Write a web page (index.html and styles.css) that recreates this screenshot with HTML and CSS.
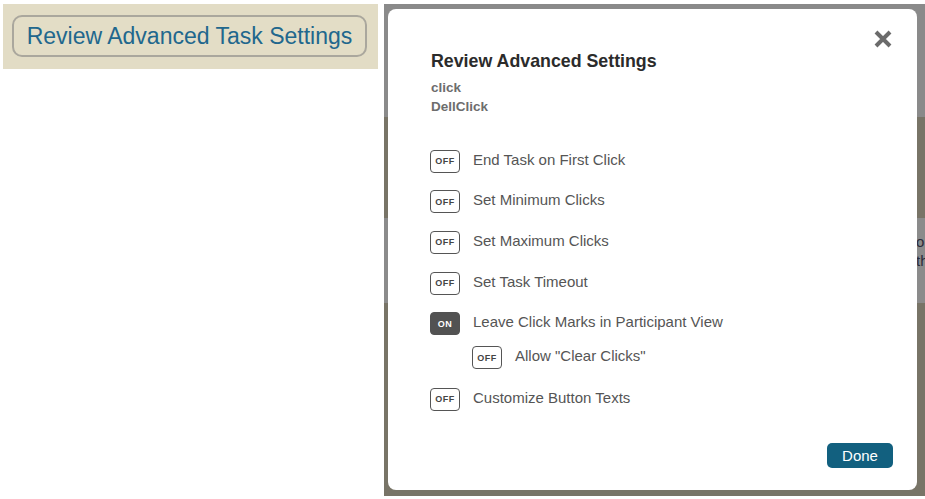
FILE: index.html
```html
<!DOCTYPE html>
<html lang="en">
<head>
  <meta charset="UTF-8">
  <meta name="viewport" content="width=device-width, initial-scale=1.0">
  <title>Review Advanced Settings</title>
  <link rel="stylesheet" href="styles.css">
</head>
<body>
  <div class="page">
    <div class="toolbar-col">
      <div class="toolbar">
        <button class="review-btn">Review Advanced Task Settings</button>
      </div>
    </div>

    <div class="overlay">
      <span class="peek">o<br>th</span>

      <div class="modal">
        <button class="close" aria-label="Close">
          <svg width="20" height="20" viewBox="0 0 20 20">
            <path d="M3 3 L17 17 M17 3 L3 17" stroke="#6b6b6b" stroke-width="4" fill="none"/>
          </svg>
        </button>

        <h2 class="modal-title">Review Advanced Settings</h2>
        <div class="meta">click<br>DellClick</div>

        <ul class="settings">
          <li class="setting"><span class="toggle">OFF</span><span class="label">End Task on First Click</span></li>
          <li class="setting"><span class="toggle">OFF</span><span class="label">Set Minimum Clicks</span></li>
          <li class="setting"><span class="toggle">OFF</span><span class="label">Set Maximum Clicks</span></li>
          <li class="setting"><span class="toggle">OFF</span><span class="label">Set Task Timeout</span></li>
          <li class="setting"><span class="toggle on">ON</span><span class="label">Leave Click Marks in Participant View</span></li>
          <li class="setting sub"><span class="toggle">OFF</span><span class="label">Allow "Clear Clicks"</span></li>
          <li class="setting"><span class="toggle">OFF</span><span class="label">Customize Button Texts</span></li>
        </ul>

        <div class="footer">
          <button class="done">Done</button>
        </div>
      </div>
    </div>
  </div>
</body>
</html>
```

FILE: styles.css
```css
body {
  margin: 0;
  font-family: "Liberation Sans", Arial, sans-serif;
  background: #fff;
}

.page {
  display: flex;
  height: 499px;
}

/* left: the page's toolbar */
.toolbar-col {
  width: 384px;
  padding: 4px 0 0 3px;
  box-sizing: border-box;
}

.toolbar {
  width: 375px;
  height: 65px;
  background: #e2dcc5;
  padding: 11px 0 0 9px;
  box-sizing: border-box;
}

.review-btn {
  width: 355px;
  height: 42px;
  background: #e3ddc6;
  border: 2px solid #aaa79d;
  border-radius: 10px;
  color: #21678d;
  font-family: inherit;
  font-size: 23px;
  padding: 0;
}

/* right: dimmed page with the dialog */
.overlay {
  position: relative;
  flex: 1;
  margin-top: 4px;
  height: 492px;
  padding: 5px 8px 6px 4px;
  box-sizing: border-box;
  overflow: hidden;
  background: linear-gradient(to bottom,
    #8a8a8a 0 113px,
    #787467 113px 214px,
    #8b8b8b 214px 299px,
    #787467 299px);
}

.peek {
  position: absolute;
  left: 532px;
  top: 228px;
  font-size: 15px;
  line-height: 19px;
  color: #2a2c3a;
}

.modal {
  position: relative;
  width: 529px;
  height: 481px;
  background: #fff;
  border-radius: 8px;
  padding: 42px 24px 22px 43px;
  box-sizing: border-box;
  display: flex;
  flex-direction: column;
}

.close {
  position: absolute;
  top: 20px;
  right: 24px;
  width: 20px;
  height: 20px;
  padding: 0;
  border: none;
  background: none;
  cursor: pointer;
}

.close svg {
  display: block;
}

.modal-title {
  margin: 0;
  font-size: 17.8px;
  line-height: 20px;
  color: #2b2b2b;
}

.meta {
  margin-top: 7px;
  font-size: 13.5px;
  font-weight: bold;
  line-height: 19px;
  color: #6d6d6d;
}

.settings {
  list-style: none;
  margin: 25px 0 0 -1px;
  padding: 0;
}

.setting {
  display: flex;
  align-items: center;
  height: 40.6px;
}

.setting.sub {
  height: 28px;
  margin-bottom: 7px;
  padding-left: 42px;
}

.toggle {
  display: inline-flex;
  align-items: center;
  justify-content: center;
  width: 30px;
  height: 23px;
  box-sizing: border-box;
  border: 1px solid #555;
  border-radius: 4px;
  font-size: 9px;
  font-weight: bold;
  letter-spacing: 0.5px;
  color: #444;
  background: #fff;
}

.toggle.on {
  background: #525252;
  border-color: #525252;
  color: #fff;
}

.label {
  margin-left: 13px;
  padding-bottom: 4px;
  font-size: 15px;
  color: #555;
}

.footer {
  margin-top: auto;
  display: flex;
  justify-content: flex-end;
}

.done {
  width: 66px;
  height: 25px;
  padding: 0;
  border: none;
  border-radius: 5px;
  background: #12607f;
  color: #fff;
  font-family: inherit;
  font-size: 15px;
  cursor: pointer;
}
```
